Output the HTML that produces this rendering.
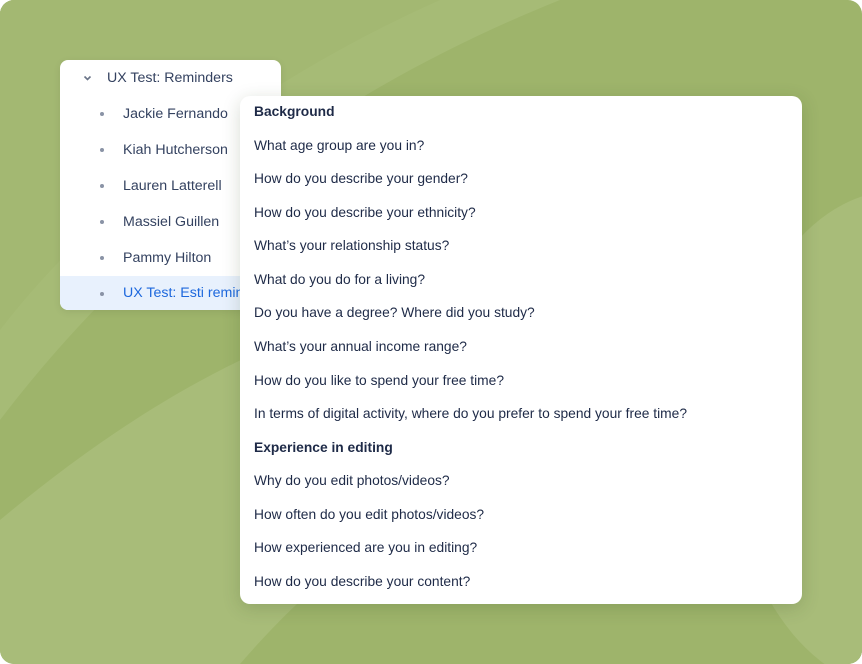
<!DOCTYPE html>
<html><head><meta charset="utf-8"><style>
html,body{margin:0;padding:0;background:#fff;}
.frame{position:relative;width:862px;height:664px;border-radius:14px;overflow:hidden;background:#9eb46b;font-family:"Liberation Sans",Arial,sans-serif;}
.bg{position:absolute;left:0;top:0}
.left{position:absolute;left:60px;top:60px;width:221px;height:250px;background:#fff;border-radius:8px;box-shadow:0 2px 8px rgba(0,0,0,.08);overflow:hidden}
.row{height:36px;line-height:36px;font-size:14.2px;color:#344260;position:relative}
.row .dot{position:absolute;left:40px;top:16px;width:4px;height:4px;border-radius:2px;background:#8a93a6}
.row span{position:absolute;left:63px}
.row.head span{left:47px}
.row.sel{background:#e8f1fd;color:#1d68dd;height:35px;line-height:35px}
.pop{position:absolute;left:240px;top:96px;width:562px;height:508px;background:#fff;border-radius:10px;box-shadow:0 4px 18px rgba(40,60,20,.18)}
.it{position:absolute;left:14px;font-size:13.8px;color:#1e2a47;line-height:16px}
.it.b{font-weight:bold}
</style></head><body>
<div class="frame">
<svg class="bg" width="862" height="664" viewBox="0 0 862 664">
<path d="M0 0 L560 0 C360 80 160 210 0 420 Z" fill="#a6bb76"/>
<path d="M0 0 L440 0 C260 80 100 200 0 330 Z" fill="#a3b872"/>
<path d="M0 664 L0 520 C120 420 260 330 420 300 L420 664 Z" fill="#a8bc79"/>
<path d="M240 664 C330 560 420 500 520 470 L862 470 L862 664 Z" fill="#9eb46b"/>
<ellipse cx="900" cy="440" rx="170" ry="250" fill="#a8bc79"/>
</svg>
<div class="left">
<div class="row head"><svg style="position:absolute;left:23px;top:14px" width="9" height="8" viewBox="0 0 9 8"><path d="M1.5 2.5 L4.5 5.5 L7.5 2.5" stroke="#6a7488" stroke-width="1.6" fill="none"/></svg><span>UX Test: Reminders</span></div>
<div class="row"><i class="dot"></i><span>Jackie Fernando</span></div>
<div class="row"><i class="dot"></i><span>Kiah Hutcherson</span></div>
<div class="row"><i class="dot"></i><span>Lauren Latterell</span></div>
<div class="row"><i class="dot"></i><span>Massiel Guillen</span></div>
<div class="row"><i class="dot"></i><span>Pammy Hilton</span></div>
<div class="row sel"><i class="dot"></i><span>UX Test: Esti reminders</span></div>
</div>
<div class="pop">
<div class="it b" style="top:8px">Background</div>
<div class="it" style="top:42px">What age group are you in?</div>
<div class="it" style="top:75px">How do you describe your gender?</div>
<div class="it" style="top:109px">How do you describe your ethnicity?</div>
<div class="it" style="top:142px">What’s your relationship status?</div>
<div class="it" style="top:176px">What do you do for a living?</div>
<div class="it" style="top:209px">Do you have a degree? Where did you study?</div>
<div class="it" style="top:243px">What’s your annual income range?</div>
<div class="it" style="top:277px">How do you like to spend your free time?</div>
<div class="it" style="top:310px">In terms of digital activity, where do you prefer to spend your free time?</div>
<div class="it b" style="top:344px">Experience in editing</div>
<div class="it" style="top:377px">Why do you edit photos/videos?</div>
<div class="it" style="top:411px">How often do you edit photos/videos?</div>
<div class="it" style="top:444px">How experienced are you in editing?</div>
<div class="it" style="top:478px">How do you describe your content?</div>
</div>
</div>
</body></html>
